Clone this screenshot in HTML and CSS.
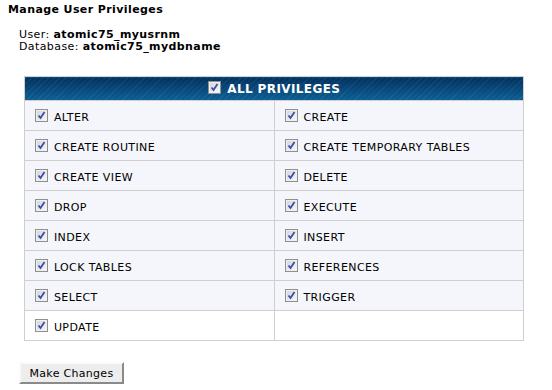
FILE: index.html
```html
<!DOCTYPE html>
<html lang="en">
<head>
    <meta charset="UTF-8">
    <title>Manage User Privileges</title>
    <link rel="stylesheet" href="styles.css">
</head>
<body>
    <svg class="defs" width="0" height="0">
        <defs>
            <linearGradient id="boxfill" x1="0" y1="0" x2="1" y2="1">
                <stop offset="0" stop-color="#d4d4d8"/>
                <stop offset="1" stop-color="#f8f8f8"/>
            </linearGradient>
            <symbol id="tick" viewBox="0 0 13 13">
                <rect x="0.5" y="0.5" width="12" height="12" fill="#fff" stroke="#8e8f8f"/>
                <rect x="1.5" y="1.5" width="10" height="10" fill="url(#boxfill)" stroke="#f0f0f0"/>
                <path d="M3.5 6.5 L5.5 9 L9.5 3" fill="none" stroke="#3a4dab" stroke-width="1.8"/>
            </symbol>
        </defs>
    </svg>

    <h1 class="title">Manage User Privileges</h1>

    <div class="who">
        <div>User: <b>atomic75_myusrnm</b></div>
        <div>Database: <b>atomic75_mydbname</b></div>
    </div>

    <table class="privs">
        <thead>
            <tr>
                <th colspan="2"><svg class="cb"><use href="#tick"/></svg> ALL PRIVILEGES</th>
            </tr>
        </thead>
        <tbody>
            <tr>
                <td><svg class="cb"><use href="#tick"/></svg> ALTER</td>
                <td><svg class="cb"><use href="#tick"/></svg> CREATE</td>
            </tr>
            <tr>
                <td><svg class="cb"><use href="#tick"/></svg> CREATE ROUTINE</td>
                <td><svg class="cb"><use href="#tick"/></svg> CREATE TEMPORARY TABLES</td>
            </tr>
            <tr>
                <td><svg class="cb"><use href="#tick"/></svg> CREATE VIEW</td>
                <td><svg class="cb"><use href="#tick"/></svg> DELETE</td>
            </tr>
            <tr>
                <td><svg class="cb"><use href="#tick"/></svg> DROP</td>
                <td><svg class="cb"><use href="#tick"/></svg> EXECUTE</td>
            </tr>
            <tr>
                <td><svg class="cb"><use href="#tick"/></svg> INDEX</td>
                <td><svg class="cb"><use href="#tick"/></svg> INSERT</td>
            </tr>
            <tr>
                <td><svg class="cb"><use href="#tick"/></svg> LOCK TABLES</td>
                <td><svg class="cb"><use href="#tick"/></svg> REFERENCES</td>
            </tr>
            <tr>
                <td><svg class="cb"><use href="#tick"/></svg> SELECT</td>
                <td><svg class="cb"><use href="#tick"/></svg> TRIGGER</td>
            </tr>
            <tr class="last">
                <td><svg class="cb"><use href="#tick"/></svg> UPDATE</td>
                <td></td>
            </tr>
        </tbody>
    </table>

    <button class="submit">Make Changes</button>
</body>
</html>
```

FILE: styles.css
```css
/* Page */
body {
    font-family: 'DejaVu Sans', Verdana, sans-serif;
    font-size: 11px;
    letter-spacing: 0.4px;
    color: #000;
    background: #fff;
    margin: 0 8px;
}

.defs {
    position: absolute;
}

.title {
    font-size: 11px;
    font-weight: bold;
    line-height: 14px;
    margin: 3px 0 0;
}

.who {
    margin: 12px 0 0 11px;
    line-height: 12px;
}

/* Privileges table */
.privs {
    border-collapse: collapse;
    width: 500px;
    margin: 23px 0 0 16px;
    border: 1px solid #cfcfcf;
}

.privs th {
    height: 23px;
    padding: 0;
    color: #fff;
    font-size: 12px;
    font-weight: bold;
    text-align: center;
    background:
        repeating-linear-gradient(135deg, rgba(255, 255, 255, 0.07) 0 1px, transparent 1px 4px),
        linear-gradient(to bottom, #02305e, #0b5f94);
}

.privs th .cb {
    vertical-align: -1px;
    margin-right: 2px;
}

.privs td {
    width: 50%;
    height: 28px;
    padding: 1px 0 0 10px;
    background: #f5f6fb;
    border: 1px solid #cfcfcf;
    white-space: nowrap;
}

.privs tr.last td {
    background: #fff;
}

.cb {
    width: 13px;
    height: 13px;
    vertical-align: -1px;
    margin-right: 2px;
}

/* Submit */
.submit {
    display: block;
    margin: 21px 0 0 11px;
    width: 105px;
    height: 22px;
    padding: 0;
    font-family: 'DejaVu Sans', Verdana, sans-serif;
    font-size: 11px;
    letter-spacing: 0.3px;
    color: #000;
    background: #ededed;
    border: 2px solid;
    border-color: #fafafa #8a8a8a #8a8a8a #fafafa;
}
```
